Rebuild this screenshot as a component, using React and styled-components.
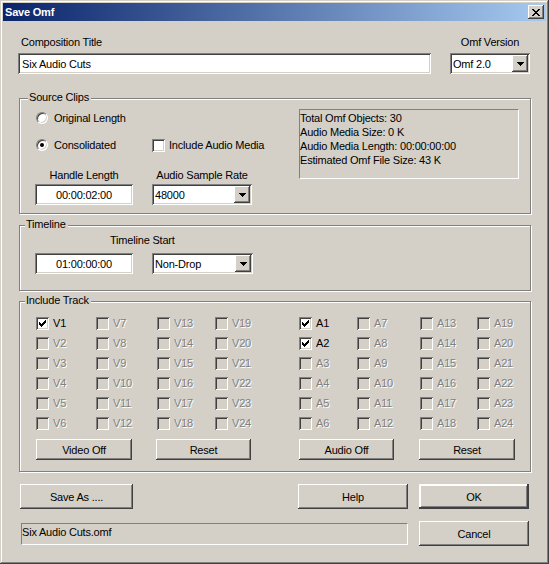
import React from "react";
import styled, { createGlobalStyle, css } from "styled-components";

const GlobalStyle = createGlobalStyle`
  html, body { margin: 0; padding: 0; background: #d4d0c8; }
  body { font: 11px "Liberation Sans", Arial, sans-serif; letter-spacing: -0.2px; color: #000; }
  * { box-sizing: border-box; }
`;

const raised = css`
  background: #d4d0c8;
  box-shadow: inset -1px -1px #404040, inset 1px 1px #fff,
    inset -2px -2px #808080, inset 2px 2px #d4d0c8;
`;

const sunken = css`
  box-shadow: inset 1px 1px #808080, inset -1px -1px #fff,
    inset 2px 2px #404040, inset -2px -2px #d4d0c8;
`;

const Window = styled.div`
  width: 549px;
  height: 564px;
  padding: 3px;
  background: #d4d0c8;
  box-shadow: inset -1px -1px #404040, inset 1px 1px #d4d0c8,
    inset -2px -2px #808080, inset 2px 2px #fff;
  display: flex;
  flex-direction: column;
`;

const TitleBar = styled.div`
  height: 18px;
  flex: none;
  display: flex;
  align-items: center;
  justify-content: space-between;
  padding: 0 2px 0 2px;
  background: linear-gradient(to right, #0a246a, #a6caf0);
  color: #fff;
  font-weight: bold;
  font-size: 11px;
`;

const CloseBtn = styled.span`
  ${raised};
  width: 16px;
  height: 14px;
  display: flex;
  align-items: center;
  justify-content: center;
`;

const Body = styled.div`
  flex: 1;
  padding: 15px 15px 0 15px;
  display: flex;
  flex-direction: column;
`;

const TopRow = styled.div`
  display: flex;
  justify-content: space-between;
  padding-right: 1px;
`;

const FieldCol = styled.div`
  width: ${(p) => p.$w}px;
  display: flex;
  flex-direction: column;
  align-items: ${(p) => (p.$center ? "center" : "flex-start")};
`;

const Label = styled.div`
  line-height: 13px;
  height: 13px;
  white-space: nowrap;
  margin-bottom: ${(p) => p.$mb || 0}px;
  margin-left: ${(p) => p.$ml || 0}px;
  padding-left: ${(p) => p.$pl || 0}px;
`;

const TextField = styled.input`
  ${sunken};
  width: ${(p) => p.$w}px;
  height: 21px;
  border: none;
  outline: none;
  background: #fff;
  font: inherit;
  letter-spacing: inherit;
  color: #000;
  padding: 0 ${(p) => (p.$center ? 2 : 4)}px;
  text-align: ${(p) => (p.$center ? "center" : "left")};
`;

const Select = styled.div`
  ${sunken};
  width: ${(p) => p.$w}px;
  height: 21px;
  background: #fff;
  padding: 2px;
  display: flex;
  align-items: center;
`;

const SelectText = styled.span`
  flex: 1;
  padding-left: 1px;
  white-space: nowrap;
`;

const ArrowBtn = styled.span`
  ${raised};
  width: 16px;
  height: 17px;
  display: flex;
  align-items: center;
  justify-content: center;
`;

const GroupBox = styled.div`
  position: relative;
  margin: ${(p) => p.$mt}px 0 0 1px;
  height: ${(p) => p.$h}px;
  border: 1px solid #808080;
  box-shadow: inset 1px 1px #fff, 1px 1px #fff;
`;

const Legend = styled.span`
  position: absolute;
  top: -8px;
  left: ${(p) => p.$left}px;
  padding: 0 2px 0 1px;
  line-height: 13px;
  background: #d4d0c8;
`;

const ClipsRow = styled.div`
  display: flex;
`;

const ClipsLeft = styled.div`
  margin-left: 15px;
  width: 217px;
  padding-top: 13px;
  display: flex;
  flex-direction: column;
`;

const Row = styled.div`
  display: flex;
  align-items: center;
  height: ${(p) => p.$h}px;
  margin-top: ${(p) => p.$mt || 0}px;
  column-gap: ${(p) => p.$gap || 0}px;
`;

const Cell = styled.div`
  width: ${(p) => p.$w}px;
  display: flex;
  align-items: center;
  justify-content: ${(p) => (p.$center ? "center" : "flex-start")};
  padding-left: ${(p) => p.$pl || 0}px;
  flex: none;
`;

const Option = styled.label`
  display: flex;
  align-items: center;
  column-gap: ${(p) => p.$gap}px;
  white-space: nowrap;
`;

const Radio = styled.span`
  width: 12px;
  height: 12px;
  flex: none;
  border-radius: 50%;
  background: #fff;
  border: 1px solid;
  border-color: #808080 #fff #fff #808080;
  box-shadow: inset 1px 1px #404040, inset -1px -1px #d4d0c8;
  display: flex;
  align-items: center;
  justify-content: center;
`;

const RadioDot = styled.span`
  width: 4px;
  height: 4px;
  border-radius: 50%;
  background: #000;
`;

const Box = styled.span`
  ${sunken};
  width: 13px;
  height: 13px;
  flex: none;
  background: ${(p) => (p.$disabled ? "#d4d0c8" : "#fff")};
  display: flex;
  align-items: center;
  justify-content: center;
`;

const InfoBox = styled.div`
  margin: 10px 0 0 47px;
  width: 220px;
  height: 70px;
  border: 1px solid;
  border-color: #808080 #fff #fff #808080;
  padding: 1px 0 0 0;
  line-height: 14px;
  white-space: nowrap;
`;

const TimelineInner = styled.div`
  padding: 8px 0 0 15px;
  display: flex;
  flex-direction: column;
`;

const TrackArea = styled.div`
  display: flex;
  padding: 11px 0 0 16px;
`;

const TrackBlock = styled.div`
  width: ${(p) => p.$w}px;
  display: flex;
  flex-direction: column;
`;

const TrackGrid = styled.div`
  display: grid;
  grid-template-columns: ${(p) => p.$cols};
  grid-template-rows: repeat(6, 20px);
  grid-auto-flow: column;
  align-items: center;
`;

const TrackLabel = styled.span`
  color: ${(p) => (p.$disabled ? "#808080" : "#000")};
  text-shadow: ${(p) => (p.$disabled ? "1px 1px 0 #fff" : "none")};
`;

const ButtonRow = styled.div`
  display: flex;
  column-gap: ${(p) => p.$gap}px;
  margin-top: 6px;
`;

const Button = styled.button`
  ${raised};
  width: ${(p) => p.$w}px;
  height: ${(p) => p.$h || 21}px;
  border: none;
  padding: 0;
  font: inherit;
  letter-spacing: inherit;
  color: #000;
  flex: none;
  ${(p) =>
    p.$default &&
    css`
      box-shadow: inset -2px -2px #404040, inset 2px 2px #fff,
        inset -3px -3px #808080, inset 3px 3px #d4d0c8, inset 0 0 0 1px #000;
    `}
`;

const BottomGrid = styled.div`
  margin-top: 12px;
  padding: 0 2px;
  display: grid;
  grid-template-columns: 1fr 110px;
  column-gap: 11px;
  row-gap: 12px;
`;

const ButtonPair = styled.div`
  display: flex;
  justify-content: space-between;
`;

const StatusField = styled.div`
  align-self: center;
  height: 22px;
  margin-left: 1px;
  border: 1px solid;
  border-color: #808080 #fff #fff #808080;
  padding: 2px 0 0 0;
  line-height: 13px;
`;

function CheckMark() {
  const rows = [
    [[6, 1]],
    [[5, 2]],
    [[0, 1], [4, 3]],
    [[0, 2], [3, 3]],
    [[0, 5]],
    [[1, 3]],
    [[2, 1]],
  ];
  return (
    <svg width="7" height="7" viewBox="0 0 7 7" shapeRendering="crispEdges">
      {rows.map((segs, y) =>
        segs.map(([x, w]) => <rect key={`${y}-${x}`} x={x} y={y} width={w} height="1" fill="#000" />)
      )}
    </svg>
  );
}

function DownArrow() {
  return (
    <svg width="7" height="4" viewBox="0 0 7 4" shapeRendering="crispEdges">
      <rect x="0" y="0" width="7" height="1" fill="#000" />
      <rect x="1" y="1" width="5" height="1" fill="#000" />
      <rect x="2" y="2" width="3" height="1" fill="#000" />
      <rect x="3" y="3" width="1" height="1" fill="#000" />
    </svg>
  );
}

function CloseX() {
  return (
    <svg width="8" height="7" viewBox="0 0 8 7" shapeRendering="crispEdges">
      {[0, 1, 2, 3, 4, 5, 6].map((i) => (
        <React.Fragment key={i}>
          <rect x={i} y={i} width="2" height="1" fill="#000" />
          <rect x={6 - i} y={i} width="2" height="1" fill="#000" />
        </React.Fragment>
      ))}
    </svg>
  );
}

function Dropdown({ w, value }) {
  return (
    <Select $w={w}>
      <SelectText>{value}</SelectText>
      <ArrowBtn>
        <DownArrow />
      </ArrowBtn>
    </Select>
  );
}

function Track({ name, on }) {
  return (
    <Option $gap={4}>
      <Box $disabled={!on}>{on && <CheckMark />}</Box>
      <TrackLabel $disabled={!on}>{name}</TrackLabel>
    </Option>
  );
}

const range = (p, on) =>
  Array.from({ length: 24 }, (_, i) => ({ name: `${p}${i + 1}`, on: on.includes(i + 1) }));

const videoTracks = range("V", [1]);
const audioTracks = range("A", [1, 2]);

export default function App() {
  return (
    <>
      <GlobalStyle />
      <Window>
        <TitleBar>
          <span>Save Omf</span>
          <CloseBtn>
            <CloseX />
          </CloseBtn>
        </TitleBar>
        <Body>
          <TopRow>
            <FieldCol $w={413}>
              <Label $mb={4} $pl={3}>Composition Title</Label>
              <TextField $w={413} value="Six Audio Cuts" readOnly />
            </FieldCol>
            <FieldCol $w={80} $center>
              <Label $mb={4}>Omf Version</Label>
              <Dropdown w={80} value="Omf 2.0" />
            </FieldCol>
          </TopRow>

          <GroupBox $mt={24} $h={116}>
            <Legend $left={8}>Source Clips</Legend>
            <ClipsRow>
              <ClipsLeft>
                <Row $h={12}>
                  <Cell $w={217} $pl={1}>
                    <Option $gap={6}>
                      <Radio />
                      Original Length
                    </Option>
                  </Cell>
                </Row>
                <Row $h={14} $mt={14}>
                  <Cell $w={117} $pl={1}>
                    <Option $gap={6}>
                      <Radio>
                        <RadioDot />
                      </Radio>
                      Consolidated
                    </Option>
                  </Cell>
                  <Cell $w={100}>
                    <Option $gap={4}>
                      <Box />
                      Include Audio Media
                    </Option>
                  </Cell>
                </Row>
                <Row $h={13} $mt={16} $gap={19}>
                  <Cell $w={98} $center>Handle Length</Cell>
                  <Cell $w={100} $center>Audio Sample Rate</Cell>
                </Row>
                <Row $h={21} $mt={3} $gap={19}>
                  <TextField $w={98} $center value="00:00:02:00" readOnly />
                  <Dropdown w={100} value="48000" />
                </Row>
              </ClipsLeft>
              <InfoBox>
                <div>Total Omf Objects: 30</div>
                <div>Audio Media Size: 0 K</div>
                <div>Audio Media Length: 00:00:00:00</div>
                <div>Estimated Omf File Size: 43 K</div>
              </InfoBox>
            </ClipsRow>
          </GroupBox>

          <GroupBox $mt={11} $h={66}>
            <Legend $left={5}>Timeline</Legend>
            <TimelineInner>
              <Label $ml={75} $mb={6}>Timeline Start</Label>
              <Row $h={21} $gap={19}>
                <TextField $w={98} $center value="01:00:00:00" readOnly />
                <Dropdown w={101} value="Non-Drop" />
              </Row>
            </TimelineInner>
          </GroupBox>

          <GroupBox $mt={10} $h={171}>
            <Legend $left={5}>Include Track</Legend>
            <TrackArea>
              <TrackBlock $w={263}>
                <TrackGrid $cols="60px 61px 58px auto">
                  {videoTracks.map((t) => (
                    <Track key={t.name} name={t.name} on={t.on} />
                  ))}
                </TrackGrid>
                <ButtonRow $gap={24}>
                  <Button $w={96}>Video Off</Button>
                  <Button $w={95}>Reset</Button>
                </ButtonRow>
              </TrackBlock>
              <TrackBlock $w={230}>
                <TrackGrid $cols="58px 63px 57px auto">
                  {audioTracks.map((t) => (
                    <Track key={t.name} name={t.name} on={t.on} />
                  ))}
                </TrackGrid>
                <ButtonRow $gap={25}>
                  <Button $w={95}>Audio Off</Button>
                  <Button $w={96}>Reset</Button>
                </ButtonRow>
              </TrackBlock>
            </TrackArea>
          </GroupBox>

          <BottomGrid>
            <ButtonPair>
              <Button $w={113} $h={25}>Save As ....</Button>
              <Button $w={110} $h={25}>Help</Button>
            </ButtonPair>
            <Button $w={110} $h={25} $default>OK</Button>
            <StatusField>Six Audio Cuts.omf</StatusField>
            <Button $w={110} $h={25}>Cancel</Button>
          </BottomGrid>
        </Body>
      </Window>
    </>
  );
}
